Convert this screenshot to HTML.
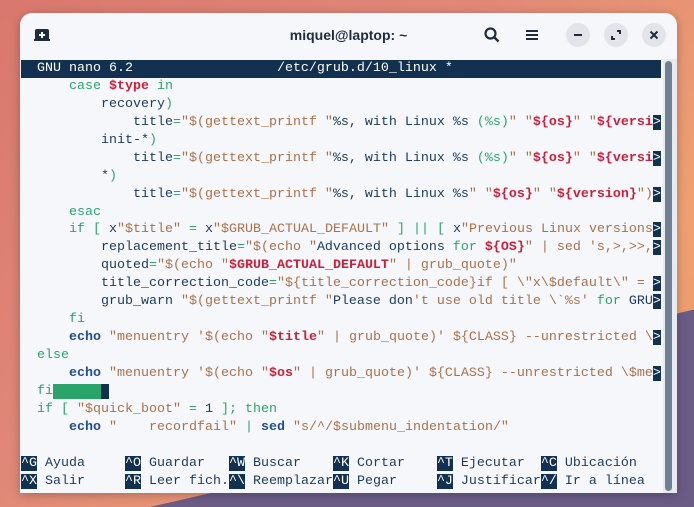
<!DOCTYPE html>
<html><head><meta charset="utf-8"><style>
html,body{margin:0;padding:0;width:694px;height:507px;overflow:hidden}
body{background:linear-gradient(135deg,#d9786e 0%,#e08878 40%,#f0a070 75%,#e89a6a 100%);position:relative;font-family:"Liberation Sans",sans-serif}
.mtn{position:absolute;left:150px;top:300px;width:600px;height:207px;background:#6b5c86;clip-path:polygon(0 100%,30% 80%,55% 65%,70% 25%,80% 12%,90% 5%,100% 0,100% 100%)}
.win{position:absolute;left:20px;top:13px;width:657px;height:480px;background:#f6f7fb;border-radius:12px 12px 0 0;box-shadow:0 2px 10px rgba(0,0,0,.25);overflow:hidden}
.hdr{position:absolute;left:0;top:0;width:657px;height:46px}
.ttl{position:absolute;left:0;width:657px;top:14px;text-align:center;font-weight:bold;font-size:14px;color:#1e2c3e}
.btn{position:absolute;top:10px;width:24px;height:24px;border-radius:50%;background:#e2e4ea}
pre{position:absolute;left:1px;top:47px;height:432px;overflow:hidden;margin:0;font-family:"Liberation Mono",monospace;font-size:13.33px;line-height:17.94px;color:#1b3a5c}
.tb{background:#12304f;color:#fff;display:inline-block;width:640px}
.g{color:#2aa46a}.r{color:#c8203a;font-weight:bold}.b{color:#a8714a}.k{color:#1f4e8c;font-weight:bold}
.a{background:#12304f;color:#fff}
.sb{position:absolute;left:645px;top:48px;width:7px;height:430px;background:#6e8093;border-radius:4px}
.tr{position:absolute;left:643px;top:46px;width:14px;height:434px;background:#e8eaef}
</style></head><body>
<div class="mtn"></div>
<div class="win">
<div class="hdr">
<svg style="position:absolute;left:14px;top:15px" width="16" height="14" viewBox="0 0 16 14"><path d="M3 1h10a2 2 0 0 1 2 2v9H1V3a2 2 0 0 1 2-2z" fill="#1e2c3e"/><rect x="0" y="11" width="16" height="2" fill="#1e2c3e"/><path d="M8 4v6M5 7h6" stroke="#fff" stroke-width="2"/></svg>
<div class="ttl">miquel@laptop: ~</div>
<svg style="position:absolute;left:464px;top:14px" width="16" height="16" viewBox="0 0 16 16"><circle cx="6.5" cy="6.5" r="5" fill="none" stroke="#1e2c3e" stroke-width="2.2"/><path d="M10 10l4.5 4.5" stroke="#1e2c3e" stroke-width="2.4"/></svg>
<svg style="position:absolute;left:506px;top:16px" width="12" height="12" viewBox="0 0 12 12"><path d="M0 2h12M0 6h12M0 10h12" stroke="#1e2c3e" stroke-width="2"/></svg>
<div class="btn" style="left:546px"><svg width="24" height="24"><path d="M8 12h8" stroke="#1e2c3e" stroke-width="2"/></svg></div>
<div class="btn" style="left:584px"><svg width="24" height="24"><path d="M8 13v3h3M16 11V8h-3" stroke="#1e2c3e" stroke-width="2" fill="none"/></svg></div>
<div class="btn" style="left:622px"><svg width="24" height="24"><path d="M8.5 8.5l7 7M15.5 8.5l-7 7" stroke="#1e2c3e" stroke-width="2"/></svg></div>
</div>
<div class="tr"></div><div class="sb"></div>
<pre><span class="tb">  GNU nano 6.2                  /etc/grub.d/10_linux *                         </span>
      <span class="g">case</span> <span class="r">$type</span> <span class="g">in</span>
          recovery<span class="g">)</span>
              title<span class="g">=</span><span class="b">"$(gettext_printf "</span>%s, with Linux %s <span class="g">(%s)</span><span class="b">" "</span><span class="r">${os}</span><span class="b">" "</span><span class="r">${versi</span><span class="a">&gt;</span>
          init-*<span class="g">)</span>
              title<span class="g">=</span><span class="b">"$(gettext_printf "</span>%s, with Linux %s <span class="g">(%s)</span><span class="b">" "</span><span class="r">${os}</span><span class="b">" "</span><span class="r">${versi</span><span class="a">&gt;</span>
          *<span class="g">)</span>
              title<span class="g">=</span><span class="b">"$(gettext_printf "</span>%s, with Linux %s<span class="b">" "</span><span class="r">${os}</span><span class="b">" "</span><span class="r">${version}</span><span class="b">")</span><span class="a">&gt;</span>
      <span class="g">esac</span>
      <span class="g">if [</span> x<span class="b">"$title"</span> <span class="g">=</span> x<span class="b">"$GRUB_ACTUAL_DEFAULT"</span> <span class="g">] || [</span> x<span class="b">"Previous Linux versions</span><span class="a">&gt;</span>
          replacement_title<span class="g">=</span><span class="b">"$(echo "</span>Advanced options <span class="g">for</span> <span class="r">${OS}</span><span class="b">" | sed 's,&gt;,&gt;&gt;,</span><span class="a">&gt;</span>
          quoted<span class="g">=</span><span class="b">"$(echo "</span><span class="r">$GRUB_ACTUAL_DEFAULT</span><span class="b">" | grub_quote)"</span>
          title_correction_code<span class="g">=</span><span class="b">"${title_correction_code}if [ \"x\$default\" = </span><span class="a">&gt;</span>
          grub_warn <span class="b">"$(gettext_printf "</span>Please don<span class="b">'t use old title \`%s'</span> <span class="g">for</span> GRU<span class="a">&gt;</span>
      <span class="g">fi</span>
      <span class="k">echo</span> <span class="b">"menuentry '$(echo "</span><span class="r">$title</span><span class="b">" | grub_quote)' ${CLASS} --unrestricted \</span><span class="a">&gt;</span>
  <span class="g">else</span>
      <span class="k">echo</span> <span class="b">"menuentry '$(echo "</span><span class="r">$os</span><span class="b">" | grub_quote)' ${CLASS} --unrestricted \$me</span><span class="a">&gt;</span>
  <span class="g">fi</span><span style="background:#2aa46a">      </span><span class="a"> </span>
  <span class="g">if [</span> <span class="b">"$quick_boot"</span> <span class="g">=</span> 1 <span class="g">];</span> <span class="g">then</span>
      <span class="k">echo</span> <span class="b">"    recordfail"</span> <span class="g">|</span> <span class="k">sed</span> <span class="b">"s/^/$submenu_indentation/"</span>

<span class="a">^G</span> Ayuda     <span class="a">^O</span> Guardar   <span class="a">^W</span> Buscar    <span class="a">^K</span> Cortar    <span class="a">^T</span> Ejecutar  <span class="a">^C</span> Ubicación
<span class="a">^X</span> Salir     <span class="a">^R</span> Leer fich.<span class="a">^\</span> Reemplazar<span class="a">^U</span> Pegar     <span class="a">^J</span> Justificar<span class="a">^/</span> Ir a línea</pre>
</div>
</body></html>
